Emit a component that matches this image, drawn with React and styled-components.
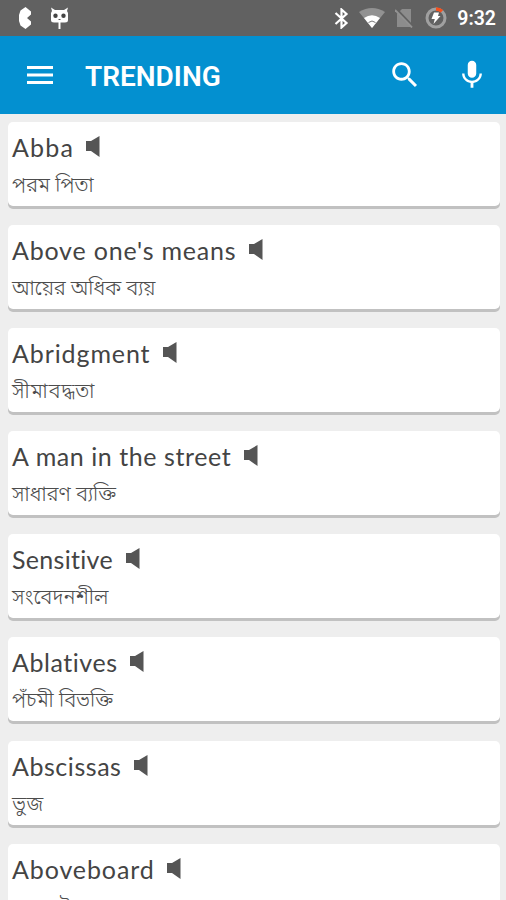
import styled, { createGlobalStyle } from "styled-components";

const GlobalStyle = createGlobalStyle`
  * {
    box-sizing: border-box;
  }

  body {
    margin: 0;
    background: #eeeeee;
    font-family: Roboto, "Liberation Sans", sans-serif;
  }
`;

const words = [
  { title: "Abba", meaning: "পরম পিতা", titleWidth: 61, spacing: 1.2 },
  { title: "Above one's means", meaning: "আয়ের অধিক ব্যয়", titleWidth: 224, spacing: 0.8, meaningSpacing: -0.15 },
  { title: "Abridgment", meaning: "সীমাবদ্ধতা", titleWidth: 138, spacing: 0.9, meaningSpacing: 0.8 },
  { title: "A man in the street", meaning: "সাধারণ ব্যক্তি", titleWidth: 219, spacing: 0.57 },
  { title: "Sensitive", meaning: "সংবেদনশীল", titleWidth: 101, spacing: 0.3, meaningSpacing: 0.2 },
  { title: "Ablatives", meaning: "পঁচমী বিভক্তি", titleWidth: 105, spacing: 0.55 },
  { title: "Abscissas", meaning: "ভুজ", titleWidth: 109, spacing: 0.55, meaningSpacing: 0.5 },
  { title: "Aboveboard", meaning: "অকপট", titleWidth: 142, spacing: 0.9 },
];

const Screen = styled.div`
  display: flex;
  flex-direction: column;
  width: 506px;
  height: 900px;
  overflow: hidden;
  background: #eeeeee;
`;

const StatusBar = styled.div`
  flex: none;
  display: flex;
  align-items: center;
  justify-content: space-between;
  height: 36px;
  padding: 0 10px 0 18px;
  background: #616161;
`;

const StatusGroup = styled.div`
  display: flex;
  align-items: center;
  gap: ${({ $gap }) => $gap}px;
`;

const Clock = styled.span`
  padding-top: 2px;
  font-size: 19.5px;
  font-weight: 600;
  line-height: 34px;
  color: #ffffff;
`;

const Toolbar = styled.header`
  flex: none;
  display: flex;
  align-items: center;
  height: 78px;
  padding: 0 17px 0 26px;
  background: #0390d0;
  color: #ffffff;
`;

const ToolbarTitle = styled.h1`
  flex: 1;
  margin: 3px 0 0 31px;
  font-size: 28px;
  font-weight: 600;
  line-height: 36px;
`;

const IconButton = styled.button`
  display: flex;
  padding: 0;
  border: 0;
  background: none;
  color: inherit;
  margin-left: ${({ $left = 0 }) => $left}px;
`;

const List = styled.main`
  display: flex;
  flex-direction: column;
  gap: 19.1px;
  padding: 8px 6.5px 0 8px;
`;

const Card = styled.article`
  flex: none;
  height: 84px;
  padding: 8px 4px 0;
  border-radius: 5px;
  background: #ffffff;
  box-shadow: 0 3px 0 #c1c1c1;
`;

const TitleRow = styled.div`
  display: flex;
  align-items: flex-start;
  gap: 13px;
  height: 34px;
`;

const Title = styled.h2`
  margin: 0;
  width: ${({ $width }) => $width}px;
  font-family: Lato, sans-serif;
  font-size: 25px;
  font-weight: 400;
  line-height: 34px;
  letter-spacing: ${({ $spacing }) => $spacing}px;
  white-space: nowrap;
  color: #444444;
`;

const Speaker = styled.svg`
  flex: none;
  margin-top: 6px;
`;

const Meaning = styled.p`
  margin: 9px 0 0;
  font-family: "Noto Sans Bengali", "Noto Sans", sans-serif;
  font-size: 20.4px;
  font-weight: 300;
  line-height: 28px;
  letter-spacing: ${({ $spacing = 0 }) => $spacing}px;
  white-space: nowrap;
  color: #4c4c4c;
`;

const WordCard = ({ word }) => (
  <Card>
    <TitleRow>
      <Title $width={word.titleWidth} $spacing={word.spacing}>{word.title}</Title>
      <Speaker width="14" height="21" viewBox="0 0 14 21">
        <path d="M0 5h5L13.500 0v21L5 15H0z" fill="#555555" />
      </Speaker>
    </TitleRow>
    <Meaning $spacing={word.meaningSpacing}>{word.meaning}</Meaning>
  </Card>
);

const App = () => (
  <>
    <GlobalStyle />
    <Screen>
      <StatusBar>
        <StatusGroup $gap={18}>
          <svg width="14" height="22" viewBox="0 0 14 22">
            <path d="M7.500 0L13 4.500V7.500L9 11L13 14.500V17.500L7.500 22L2.500 18.500L1 14V8L2.500 3.500z" fill="#fff" />
          </svg>
          <svg width="19" height="23" viewBox="0 0 19 23">
            <path d="M1 0.500L5 3H14L18 0.500L17 4L18 6V13Q18 15.500 15 15.500H4Q1 15.500 1 13V6L2 4z" fill="#fff" />
            <circle cx="5.500" cy="8.800" r="2.200" fill="#444" />
            <circle cx="13.500" cy="8.800" r="2.200" fill="#444" />
            <path d="M8.500 12.500h2" stroke="#555" />
            <path d="M9.500 15v7" stroke="#fff" strokeWidth="2" />
          </svg>
        </StatusGroup>
        <StatusGroup $gap={10}>
          <svg width="15" height="21" viewBox="0 0 15 21">
            <path d="M1.500 5L12.500 15L7.500 19.500V1.500L12.500 6L1.500 16" fill="none" stroke="#fff" strokeWidth="2.200" />
          </svg>
          <svg width="26" height="20" viewBox="0 0 26 20">
            <path d="M0 4Q13-4 26 4L13 20z" fill="#929292" />
            <path d="M5 10Q13 4.500 21 10L13 20z" fill="#fff" />
            <path d="M9.500 14.500Q13 11.500 16.500 14.500" fill="none" stroke="#777" />
          </svg>
          <svg width="20" height="20" viewBox="0 0 20 20">
            <path d="M7 1H16V19H2V6z" fill="#8c8c8c" />
            <path d="M0 0L17 18" stroke="#616161" strokeWidth="3" />
            <path d="M0 2L17 19.500" stroke="#929292" strokeWidth="1.800" />
          </svg>
          <svg width="22" height="22" viewBox="0 0 22 22">
            <circle cx="11" cy="11" r="9" fill="none" stroke="#a0a0a0" strokeWidth="3" />
            <path d="M11 2A9 9 0 0 1 17 4.300" fill="none" stroke="#f4511e" strokeWidth="3.500" />
            <path d="M9 5.500H14L13 9H15.500L8.500 17L9.800 12H6.500z" fill="#fff" />
          </svg>
          <Clock>9:32</Clock>
        </StatusGroup>
      </StatusBar>
      <Toolbar>
        <IconButton aria-label="Menu">
          <svg width="28" height="20" viewBox="0 0 28 20">
            <path d="M1 2.500H27M1 10H27M1 17.500H27" stroke="currentColor" strokeWidth="3" />
          </svg>
        </IconButton>
        <ToolbarTitle>TRENDING</ToolbarTitle>
        <IconButton aria-label="Search">
          <svg width="34" height="34" viewBox="0 0 24 24">
            <path
              d="M15.500 14h-.790l-.280-.270C15.410 12.590 16 11.110 16 9.500 16 5.910 13.090 3 9.500 3S3 5.910 3 9.500 5.910 16 9.500 16c1.610 0 3.090-.590 4.230-1.570l.270.280v.790l5 4.990L20.490 19l-4.990-5zm-6 0C7.010 14 5 11.990 5 9.500S7.010 5 9.500 5 14 7.010 14 9.500 11.990 14 9.500 14z"
              fill="currentColor"
            />
          </svg>
        </IconButton>
        <IconButton aria-label="Voice search" $left={33}>
          <svg width="34" height="34" viewBox="0 0 24 24">
            <path
              d="M12 14c1.660 0 2.990-1.340 2.990-3L15 5c0-1.660-1.340-3-3-3S9 3.340 9 5v6c0 1.660 1.340 3 3 3zm5.300-3c0 3-2.540 5.100-5.300 5.100S6.700 14 6.700 11H5c0 3.410 2.720 6.230 6 6.720V21h2v-3.280c3.280-.480 6-3.300 6-6.720h-1.700z"
              fill="currentColor"
            />
          </svg>
        </IconButton>
      </Toolbar>
      <List>
        {words.map((word) => (
          <WordCard key={word.title} word={word} />
        ))}
      </List>
    </Screen>
  </>
);

export default App;
